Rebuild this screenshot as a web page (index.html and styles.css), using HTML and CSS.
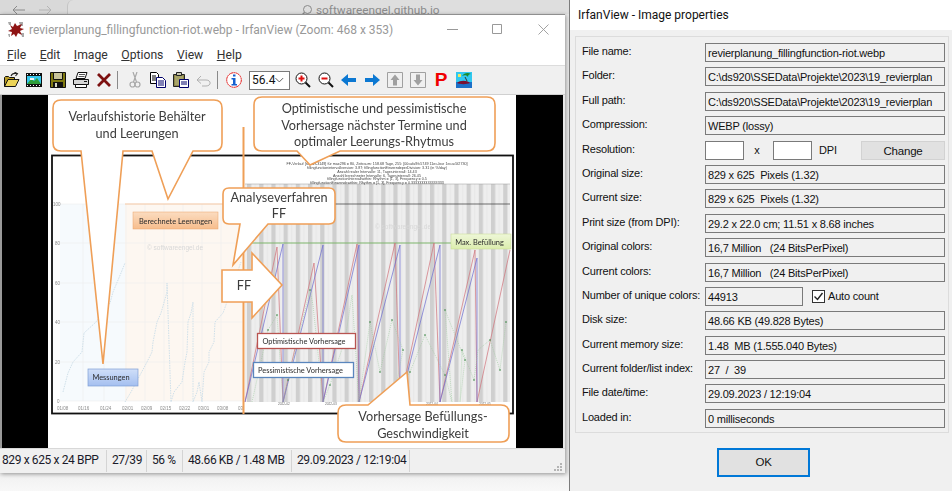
FILE: index.html
```html
<!DOCTYPE html>
<html lang="en">
<head>
    <meta charset="UTF-8">
    <title>IrfanView</title>
    <link rel="stylesheet" href="styles.css">
</head>
<body>
<div class="desktop">

    <!-- browser behind the windows -->
    <div class="browser-bar">
        <svg class="nav-arrow" width="14" height="10" viewBox="0 0 14 10"><path d="M13 5H1M5 1 1 5l4 4" fill="none" stroke="#8a8a8a"/></svg>
        <svg class="nav-arrow" width="14" height="10" viewBox="0 0 14 10"><path d="M1 5h12M9 1l4 4-4 4" fill="none" stroke="#b4b4b4"/></svg>
        <div class="browser-tab">
            <svg class="search-icon" width="14" height="14" viewBox="0 0 14 14"><circle cx="8.500" cy="5.500" r="4" fill="none" stroke="#8a8a8a"/><path d="M5.500 8.500 1 13" stroke="#8a8a8a" stroke-width="1.400"/></svg>
            <span class="browser-url">softwareengel.github.io</span>
        </div>
    </div>

    <!-- main IrfanView window -->
    <div class="viewer-window">
        <div class="titlebar">
            <svg class="app-icon" width="16" height="16" viewBox="0 0 16 16">
                <path d="M11 0h4v4h-3zM0 0h3v3H1zM13 11h3v4h-2zM0 12h2v3H1z" fill="#a8a8a8"/>
                <path d="M2 3 5 5 7 1 9 4 14 2 12 6 16 7 12 9 14 13 10 11 8 15 6 12 3 14 4 10 0 9 4 7Z" fill="#8f1414"/>
            </svg>
            <span class="title-text">revierplanung_fillingfunction-riot.webp - IrfanView (Zoom: 468 x 353)</span>
            <div class="win-controls">
                <svg width="11" height="11" viewBox="0 0 11 11"><path d="M0 5.500h11" stroke="#999"/></svg>
                <svg width="11" height="11" viewBox="0 0 11 11"><path d="M.5.5h9v9h-9z" fill="none" stroke="#999"/></svg>
                <svg width="13" height="11" viewBox="0 0 11 11"><path d="M.5.5l10 10M10.500.5l-10 10" stroke="#999" stroke-width=".9"/></svg>
            </div>
        </div>

        <div class="menubar">
            <span class="menu-item"><u>F</u>ile</span>
            <span class="menu-item"><u>E</u>dit</span>
            <span class="menu-item"><u>I</u>mage</span>
            <span class="menu-item"><u>O</u>ptions</span>
            <span class="menu-item"><u>V</u>iew</span>
            <span class="menu-item"><u>H</u>elp</span>
        </div>

        <div class="toolbar">
            <svg class="tool" viewBox="0 0 16 16"><path d="M.5 14.500V5.500l1-1h3l1 1h5v2" fill="#b89c28" stroke="#111"/><path d="M.5 14.500h11l3.500-7H4z" fill="#ecd458" stroke="#111"/><path d="M7 4c1-2.500 3-3 5.500-2.500M10.500.2l3 1.500-2 2.300" fill="none" stroke="#222" stroke-width="1.100"/></svg>
            <svg class="tool tool-wide" viewBox="0 0 16 16"><path d="M0 1h16v14H0z" fill="#111"/><path d="M1 4h14v8H1z" fill="#37c8ee"/><path d="M1 12l4-5 3 2 3-3 4 6z" fill="#2f9e3a"/><path d="M4 6h4v2H4z" fill="#f2f2f2"/><path d="M1 2h1v1H1zM4 2h1v1H4zM7 2h1v1H7zM10 2h1v1h-1zM13 2h1v1h-1zM1 13h1v1H1zM4 13h1v1H4zM7 13h1v1H7zM10 13h1v1h-1zM13 13h1v1h-1z" fill="#fff"/></svg>
            <svg class="tool" viewBox="0 0 16 16"><path d="M.5.5h15v15H.5z" fill="#807a10" stroke="#111"/><path d="M3.500.5h9v7h-9z" fill="#c8c49a" stroke="#111"/><path d="M3 10h10v5.500H3z" fill="#111"/><path d="M5 11h2v4H5z" fill="#d8d8c0"/></svg>
            <svg class="tool" viewBox="0 0 16 16"><path d="M5 .5h9l-2 6H3z" fill="#fff" stroke="#111"/><path d="M.5 7.500h15v5H.5z" fill="#d6d6d6" stroke="#111"/><path d="M2.500 12.500h11v3h-11z" fill="#fff" stroke="#111"/><path d="M6 2.500h6M5.500 4.500h6" stroke="#555"/><path d="M11 9.500h3" stroke="#111"/></svg>
            <svg class="tool" viewBox="0 0 16 16"><path d="M2 2l12 12M14 2 2 14" stroke="#7c1010" stroke-width="2.800"/></svg>
            <span class="tool-sep"></span>
            <svg class="tool tool-after-sep" viewBox="0 0 16 16"><path d="M6 0l3.500 10M10 0 6.500 10" stroke="#a8a8a8" stroke-width="1.200" fill="none"/><circle cx="5.500" cy="12.500" r="2.500" fill="none" stroke="#a8a8a8" stroke-width="1.200"/><circle cx="10.500" cy="12.500" r="2.500" fill="none" stroke="#a8a8a8" stroke-width="1.200"/></svg>
            <svg class="tool" viewBox="0 0 16 16"><path d="M.5.5h6l2 2v9h-8z" fill="#fff" stroke="#000"/><path d="M2 4h4M2 6h4M2 8h4" stroke="#000"/><path d="M6.500 5.500h6l3 3v7h-9z" fill="#fff" stroke="#00006a"/><path d="M8 9h6M8 11h6M8 13h6" stroke="#00006a"/></svg>
            <svg class="tool" viewBox="0 0 16 16"><path d="M.5 2.500h11v12H.5z" fill="#8c8648" stroke="#222"/><path d="M2 4h8v9H2z" fill="#a8a468"/><path d="M3.500 .5h5v3h-5z" fill="#c8c8b0" stroke="#222"/><path d="M6.500 7.500h9v8h-9z" fill="#fff" stroke="#00006a"/><path d="M8 10h6M8 12h6" stroke="#00006a"/></svg>
            <svg class="tool" viewBox="0 0 16 16"><path d="M1 8h9c5.500 0 5.500 6 0 6H6" fill="none" stroke="#b0b0b0"/><path d="M5 4 1 8l4 3.500" fill="none" stroke="#b0b0b0"/></svg>
            <span class="tool-sep"></span>
            <svg class="tool tool-info" viewBox="0 0 16 16"><circle cx="8" cy="8" r="7.300" fill="#fff" stroke="#e41414" stroke-dasharray="2 .4"/><path d="M7 2.500h2.500v2H7zM5.500 6H9.500v6H11v1.500H5.500V12H7V7.500H5.500z" fill="#1460d0"/></svg>
            <div class="zoom-combo"><span>56.4</span><svg width="9" height="6" viewBox="0 0 9 6"><path d="M.5 1l4 4 4-4" fill="none" stroke="#555"/></svg></div>
            <svg class="tool tool-zoom" viewBox="0 0 16 16"><circle cx="6.500" cy="6.500" r="5.500" fill="#fff" stroke="#111"/><path d="M10.500 10.500 15 15" stroke="#111" stroke-width="2"/><path d="M3.500 6.500h6M6.500 3.500v6" stroke="#e01010" stroke-width="2"/></svg>
            <svg class="tool" viewBox="0 0 16 16"><circle cx="6.500" cy="6.500" r="5.500" fill="#fff" stroke="#111"/><path d="M10.500 10.500 15 15" stroke="#111" stroke-width="2"/><path d="M3.500 6.500h6" stroke="#e01010" stroke-width="2"/></svg>
            <svg class="tool" viewBox="0 0 16 16"><path d="M0 8 7 2v4h8v4H7v4z" fill="#0c78d2"/></svg>
            <svg class="tool" viewBox="0 0 16 16"><path d="M16 8 9 2v4H1v4h8v4z" fill="#0c78d2"/></svg>
            <svg class="tool" viewBox="0 0 16 16"><path d="M.5.5h15v15H.5z" fill="none" stroke="#a0a0a0"/><path d="M8 2.500l4.500 5.500H10v5.500H6V8H3.500z" fill="#a0a0a0"/></svg>
            <svg class="tool" viewBox="0 0 16 16"><path d="M.5.5h15v15H.5z" fill="none" stroke="#a0a0a0"/><path d="M8 13.500 12.500 8H10V2.500H6V8H3.500z" fill="#a0a0a0"/></svg>
            <span class="tool tool-letter">P</span>
            <svg class="tool" viewBox="0 0 16 16"><path d="M0 0h16v16H0z" fill="#30c8f0"/><path d="M0 10h16v6H0z" fill="#1c70c8"/><path d="M1 11c3-3 10-3 13 0-3 1.500-10 1.500-13 0z" fill="#7a1030"/><path d="M11 9 9 5" stroke="#333"/><path d="M6 4c2-3 6-4 9-2-2 0-3 1-3 3-1-2-4-2-6-1z" fill="#1c8a2c"/><path d="M2 2h3v3H2z" fill="#f0e860"/></svg>
        </div>

        <div class="viewport">
            <svg class="picture" width="468" height="353" viewBox="48 95 468 353">
                <defs>
                    <pattern id="stripes" width="12.200" height="10" patternUnits="userSpaceOnUse" x="247">
                        <rect width="12.200" height="10" fill="#eeeeee"/>
                        <rect width="4.200" height="10" fill="#cfcfcf"/>
                        <rect x="8" width=".6" height="10" fill="#e2e2e2"/>
                    </pattern>
                    <linearGradient id="grad-orange" x1="0" y1="0" x2="0" y2="1"><stop offset="0" stop-color="#fbdcc0"/><stop offset="1" stop-color="#f7bd8c"/></linearGradient>
                    <linearGradient id="grad-green" x1="0" y1="0" x2="0" y2="1"><stop offset="0" stop-color="#eef7d8"/><stop offset="1" stop-color="#dcedae"/></linearGradient>
                    <linearGradient id="grad-blue" x1="0" y1="0" x2="0" y2="1"><stop offset="0" stop-color="#d0dff8"/><stop offset="1" stop-color="#a4bff0"/></linearGradient>
                </defs>
                <rect x="48" y="95" width="468" height="353" fill="#fff"/>

                <!-- left chart, history -->
                <rect x="60" y="204" width="65" height="197" fill="#f6fafd"/>
                <rect x="125" y="204" width="118" height="197" fill="#fdf7f1"/>
                <path class="grid" d="M60 204H243M60 243H243M60 283H243M60 322H243M60 362H243M60 401H243M83 204V401M104 204V401M126 204V401M145 204V401M164 204V401M183 204V401M202 204V401M221 204V401"/>
                <path d="M125 204H243" stroke="#f6c8a4"/>
                <polyline class="history" points="63,392 68,373 73,362 82,352 84,333 96,322 110,303 113,292 121,273 125,263"/>
                <polyline class="history" points="125,402 131,392 147,362 152,352 153,342 157,322 161,313 167,292 167,283 171,402 174,392 182,382 185,362 187,352 188,322 191,313 193,302 193,402 197,392 199,382 202,402 204,372 209,362 209,352 214,342 215,322 223,313 227,302 234,282 241,262"/>
                <g class="axis-text">
                    <text x="53" y="206">100</text><text x="55" y="245">80</text><text x="55" y="285">60</text><text x="55" y="324">40</text><text x="55" y="364">20</text><text x="57" y="403">0</text>
                    <text x="57" y="410">01/08</text><text x="78" y="410">01/16</text><text x="100" y="410">01/24</text><text x="122" y="410">02/01</text><text x="141" y="410">02/09</text><text x="160" y="410">02/15</text><text x="179" y="410">02/22</text><text x="198" y="410">03/01</text><text x="217" y="410">03/08</text><text x="238" y="410">03</text>
                </g>
                <text class="watermark" x="147" y="250">© softwareengel.de</text>

                <!-- right chart, forecast -->
                <rect x="245" y="184" width="265" height="218" fill="url(#stripes)"/>
                <path d="M245 184H510" stroke="#999" stroke-width=".5"/>
                <path d="M245 204H510" stroke="#333" stroke-width=".7"/>
                <path d="M245 243H451" stroke="#7db56b" stroke-width="1"/>
                <path class="red-line" d="M245 402 277 247 283 402 314 263 323 402 357 244 359 402 395 243 400 402 434 243 440 402 475 250 477 402 510 250"/>
                <path class="blue-line" d="M245 402 283 244V402L323 245V402L359 245V402L400 245V402L440 245V402L477 258V402"/>
                <polyline class="green-line" points="252,402 268,330 277,315 283,402 288,380 310,290 313,305 323,402 330,385 345,340 352,295 359,402 370,322 380,372 392,320 403,350 393,402 410,372 425,335 445,375 452,402 445,310 465,360 460,402 462,350 474,380 478,350 490,340 500,370 506,322"/>
                <g class="green-dots">
                    <circle cx="268" cy="330" r=".8"/><circle cx="277" cy="315" r=".8"/><circle cx="288" cy="380" r=".8"/><circle cx="310" cy="290" r=".8"/><circle cx="330" cy="385" r=".8"/><circle cx="345" cy="340" r=".8"/><circle cx="370" cy="322" r=".8"/><circle cx="380" cy="372" r=".8"/><circle cx="392" cy="320" r=".8"/><circle cx="403" cy="350" r=".8"/><circle cx="410" cy="372" r=".8"/><circle cx="425" cy="335" r=".8"/><circle cx="445" cy="375" r=".8"/><circle cx="445" cy="310" r=".8"/><circle cx="465" cy="360" r=".8"/><circle cx="462" cy="350" r=".8"/><circle cx="474" cy="380" r=".8"/><circle cx="490" cy="340" r=".8"/><circle cx="500" cy="370" r=".8"/><circle cx="506" cy="322" r=".8"/>
                </g>
                <text class="watermark" x="375" y="229">© softwareengel.de</text>
                <g class="chart-title">
                    <text x="377" y="165">FF-Verlauf [sdf-f2f-3149] für max296 = 80, Zeitraum: 158.68 Tage, 255: [00cafa9fc5749 11ec-bce 1ecac5f2730]</text>
                    <text x="377" y="169">fillingfunctionintervallversion: 3.87; fillingfunctionEinwendeperDivision: 3.31 (in %/day)</text>
                    <text x="377" y="172.500">Anzahl realer Intervalle: 11, Tagesintervall: 14.43</text>
                    <text x="377" y="176.500">Anzahl berechneter Intervalle: 6, Tagesintervall: 26.45</text>
                    <text x="377" y="180">fillingfunctionIntervallwithin: Rhythm = [1, 3], Frequency = 0.5</text>
                    <text x="377" y="183.500">fillingfunctionEinwendewithin: Rhythm = [1, 3], Frequency = 0.3333333333333333</text>
                </g>
                <text class="date-text" x="278" y="405">2022-02</text>
                <text class="date-text" x="325" y="405">2022-03</text>
                <text class="date-text" x="426" y="404.500">2022-04</text>
                <text class="date-text" x="479" y="404.500">2022-05</text>

                <rect class="frame" x="52" y="155.500" width="461" height="258"/>
                <path class="orange-line" d="M243.500 127V414"/>

                <!-- callouts -->
                <path class="callout" d="M61 100H214Q222 100 222 108V143Q222 151 214 151H193L168 199 152 151H123L103 364 81 151H61Q53 151 53 143V108Q53 100 61 100Z"/>
                <text class="callout-text" x="137" y="121">Verlaufshistorie Behälter</text>
                <text class="callout-text" x="137" y="137.500">und Leerungen</text>

                <path class="callout" d="M262 97H487Q495 97 495 105V143Q495 151 487 151H340L310 165 297 151H262Q254 151 254 143V105Q254 97 262 97Z"/>
                <text class="callout-text" x="374" y="113">Optimistische und pessimistische</text>
                <text class="callout-text" x="374" y="130">Vorhersage nächster Termine und</text>
                <text class="callout-text" x="374" y="146">optimaler Leerungs-Rhytmus</text>

                <path class="callout" d="M229 188H329Q335 188 335 194V218Q335 224 329 224H268L233 265 240 224H229Q223 224 223 218V194Q223 188 229 188Z"/>
                <text class="callout-text" x="279" y="202">Analyseverfahren</text>
                <text class="callout-text" x="279" y="218">FF</text>

                <path class="callout" d="M222 270H252V253L282 285 252 318V302H222Z"/>
                <text class="callout-text" x="244" y="290">FF</text>

                <path class="callout" d="M346 405H368L407 372 410 405H501Q509 405 509 413V434Q509 442 501 442H346Q338 442 338 434V413Q338 405 346 405Z"/>
                <text class="callout-text" x="423" y="420.500">Vorhersage Befüllungs-</text>
                <text class="callout-text" x="423" y="437.500">Geschwindigkeit</text>

                <!-- labels on the charts -->
                <rect class="tag tag-orange" x="133" y="212" width="85" height="17"/>
                <text class="tag-text" x="175.500" y="224">Berechnete Leerungen</text>
                <rect class="tag tag-green" x="451" y="234" width="60" height="15"/>
                <text class="tag-text" x="479.500" y="245">Max. Befüllung</text>
                <rect class="tag tag-blue" x="88" y="369" width="50" height="17"/>
                <text class="tag-text" x="111" y="380">Messungen</text>
                <rect class="tag tag-red-line" x="257.500" y="333.500" width="98" height="15"/>
                <text class="tag-text" x="304" y="344">Optimistische  Vorhersage</text>
                <rect class="tag tag-blue-line" x="253.500" y="362.500" width="100" height="15"/>
                <text class="tag-text" x="300.500" y="373">Pessimistische  Vorhersage</text>
            </svg>
        </div>

        <div class="statusbar">
            <span class="status-cell status-size">829 x 625 x 24 BPP</span>
            <span class="status-cell status-index">27/39</span>
            <span class="status-cell status-zoom">56 %</span>
            <span class="status-cell status-bytes">48.66 KB / 1.48 MB</span>
            <span class="status-cell status-date">29.09.2023 / 12:19:04</span>
            <svg class="grip" width="10" height="10" viewBox="0 0 10 10"><path d="M7 1h2v2H7zM4 4h2v2H4zM7 4h2v2H7zM1 7h2v2H1zM4 7h2v2H4zM7 7h2v2H7z" fill="#b4b4b4"/></svg>
        </div>
    </div>

    <!-- properties dialog -->
    <div class="props-window">
        <div class="props-title">IrfanView - Image properties</div>
        <div class="props-body">
            <div class="props-group">
                <span class="prop-label">File name:</span>
                <div class="prop-value">revierplanung_fillingfunction-riot.webp</div>

                <span class="prop-label">Folder:</span>
                <div class="prop-value">C:\ds920\SSEData\Projekte\2023\19_revierplan</div>

                <span class="prop-label">Full path:</span>
                <div class="prop-value">C:\ds920\SSEData\Projekte\2023\19_revierplan</div>

                <span class="prop-label">Compression:</span>
                <div class="prop-value">WEBP (lossy)</div>

                <span class="prop-label">Resolution:</span>
                <div class="prop-inline">
                    <div class="prop-input"></div>
                    <span class="prop-x">x</span>
                    <div class="prop-input"></div>
                    <span class="prop-dpi">DPI</span>
                    <div class="change-btn">Change</div>
                </div>

                <span class="prop-label">Original size:</span>
                <div class="prop-value">829 x 625&nbsp; Pixels (1.32)</div>

                <span class="prop-label">Current size:</span>
                <div class="prop-value">829 x 625&nbsp; Pixels (1.32)</div>

                <span class="prop-label">Print size (from DPI):</span>
                <div class="prop-value">29.2 x 22.0 cm; 11.51 x 8.68 inches</div>

                <span class="prop-label">Original colors:</span>
                <div class="prop-value">16,7 Million &nbsp; (24 BitsPerPixel)</div>

                <span class="prop-label">Current colors:</span>
                <div class="prop-value">16,7 Million &nbsp; (24 BitsPerPixel)</div>

                <span class="prop-label">Number of unique colors:</span>
                <div class="prop-inline">
                    <div class="prop-value prop-unique">44913</div>
                    <span class="check-box"><svg width="11" height="11" viewBox="0 0 11 11"><path d="M1.500 5.500 4.500 8.500 9.500 2" fill="none" stroke="#222" stroke-width="1.400"/></svg></span>
                    <span class="check-label">Auto count</span>
                </div>

                <span class="prop-label">Disk size:</span>
                <div class="prop-value">48.66 KB (49.828 Bytes)</div>

                <span class="prop-label">Current memory size:</span>
                <div class="prop-value">1.48&nbsp; MB (1.555.040 Bytes)</div>

                <span class="prop-label">Current folder/list index:</span>
                <div class="prop-value">27&nbsp; /&nbsp; 39</div>

                <span class="prop-label">File date/time:</span>
                <div class="prop-value">29.09.2023 / 12:19:04</div>

                <span class="prop-label">Loaded in:</span>
                <div class="prop-value">0 milliseconds</div>
            </div>
            <div class="props-actions">
                <div class="ok-btn">OK</div>
            </div>
        </div>
    </div>

</div>
</body>
</html>
```

FILE: styles.css
```css
body {
    margin: 0;
    font-family: "Liberation Sans", Arial, sans-serif;
    color: #111;
}
.desktop {
    position: relative;
    width: 952px;
    height: 491px;
    overflow: hidden;
    background: linear-gradient(to bottom, #e8e8e8 473px, #f2f2f2 478px, #f8f8f8 491px);
}

/* browser behind */
.browser-bar {
    position: absolute;
    left: 0;
    top: 0;
    width: 569px;
    height: 14px;
    display: flex;
    align-items: flex-start;
    background: #d9d9d9;
    overflow: hidden;
}
.nav-arrow {
    margin: 5px 0 0 12px;
    flex: none;
}
.nav-arrow + .nav-arrow {
    margin-left: 12px;
}
.browser-tab {
    flex: 1;
    margin: 0 0 0 15px;
    height: 20px;
    display: flex;
    align-items: flex-start;
    padding-left: 231px;
    background: #dedede;
    border-left: 1px solid #c4c4c4;
    border-radius: 6px 0 0 0;
}
.search-icon {
    margin-top: 4px;
}
.browser-url {
    margin: 3px 0 0 3px;
    font-family: Roboto, sans-serif;
    font-size: 11.800px;
    color: #8c8c8c;
}

/* main window */
.viewer-window {
    position: absolute;
    left: 0;
    top: 14px;
    width: 565px;
    height: 459px;
    display: flex;
    flex-direction: column;
    background: #fff;
    border-top: 1px solid #8f8f8f;
    box-sizing: border-box;
    box-shadow: 1px 1px 4px rgba(0, 0, 0, .35);
}
.titlebar {
    height: 29px;
    flex: none;
    display: flex;
    align-items: center;
    padding-left: 8px;
}
.app-icon {
    flex: none;
}
.title-text {
    margin-left: 5px;
    font-family: Roboto, sans-serif;
    font-size: 12px;
    color: #999;
    white-space: nowrap;
}
.win-controls {
    margin-left: auto;
    display: flex;
    gap: 34px;
    padding-right: 15px;
}
.menubar {
    height: 21px;
    flex: none;
    display: flex;
    align-items: center;
    font-family: Roboto, sans-serif;
    font-size: 12.200px;
    color: #333;
    padding-left: 7px;
    gap: 13.500px;
}
.menu-item {
    white-space: nowrap;
}
.toolbar {
    height: 30px;
    flex: none;
    display: flex;
    align-items: center;
    gap: 7px;
    padding-left: 4px;
    background: #f0f0f0;
    border-top: 1px solid #dcdcdc;
    border-bottom: 1px solid #d0d0d0;
    box-sizing: border-box;
}
.tool {
    width: 16px;
    height: 16px;
    flex: none;
}
.tool-wide {
    margin-left: -1px;
    margin-right: 1px;
}
.tool-sep {
    width: 1px;
    height: 18px;
    margin: 0 -2px;
    background: #8a8a8a;
    flex: none;
}
.tool-after-sep {
    margin-left: 4px;
}
.tool-info {
    margin-left: 3px;
}
.tool-zoom {
    margin-left: -2px;
}
.tool-letter {
    font-weight: bold;
    font-size: 19px;
    line-height: 16px;
    text-align: center;
    color: #f00000;
}
.zoom-combo {
    width: 41px;
    height: 19px;
    box-sizing: border-box;
    border: 1px solid #7a7a7a;
    background: #fff;
    display: flex;
    align-items: center;
    justify-content: space-between;
    padding: 0 5px 0 2px;
    font-family: Roboto, sans-serif;
    font-size: 12px;
    flex: none;
}
.viewport {
    flex: 1;
    min-height: 0;
    display: flex;
    background: #000;
    border-left: 2px solid #9a9a9a;
    border-right: 2px solid #e8e8e8;
    box-sizing: border-box;
    padding-left: 46px;
}
.picture {
    display: block;
    flex: none;
    filter: blur(.3px);
}
.statusbar {
    height: 25px;
    flex: none;
    display: flex;
    align-items: center;
    background: #f0f0f0;
    border-top: 1px solid #d8d8d8;
    box-sizing: border-box;
    font-family: Roboto, sans-serif;
    font-size: 12px;
    letter-spacing: -.38px;
    color: #1a1a2a;
    position: relative;
}
.status-cell {
    height: 22px;
    line-height: 21px;
    box-sizing: border-box;
    padding-left: 5px;
    border-right: 1px solid #d4d4d4;
    white-space: nowrap;
    flex: none;
}
.status-size { width: 107px; padding-left: 2px; }
.status-index { width: 40px; }
.status-zoom { width: 36px; }
.status-bytes { width: 109px; }
.status-date { width: 118px; }
.grip {
    position: absolute;
    right: 2px;
    bottom: 1px;
}

/* chart parts */
.grid {
    stroke: #eeeeee;
    stroke-width: .6;
    fill: none;
}
.history {
    fill: none;
    stroke: #cfe0ea;
    stroke-width: 1;
    stroke-dasharray: 1.500 1;
}
.axis-text text {
    font-family: "Liberation Sans", sans-serif;
    font-size: 4.500px;
    fill: #8a8a8a;
}
.watermark {
    font-family: "Liberation Sans", sans-serif;
    font-size: 6.500px;
    fill: #d8d8d8;
}
.red-line {
    fill: none;
    stroke: #d07078;
    stroke-width: .7;
}
.blue-line {
    fill: none;
    stroke: #6a6ad0;
    stroke-width: .7;
}
.green-line {
    fill: none;
    stroke: #9ecb9e;
    stroke-width: .6;
    stroke-dasharray: 1 1;
}
.green-dots circle {
    fill: #2f7d3a;
}
.chart-title text {
    font-family: "Liberation Sans", sans-serif;
    font-size: 3.700px;
    text-anchor: middle;
    fill: #444;
}
.date-text {
    font-family: "Liberation Sans", sans-serif;
    font-size: 3.200px;
    fill: #666;
}
.frame {
    fill: none;
    stroke: #111;
    stroke-width: 1.800;
}
.orange-line {
    stroke: #ef9f57;
    stroke-width: 2;
}
.callout {
    fill: #fff;
    stroke: #ef9f57;
    stroke-width: 1.600;
}
.callout-text {
    font-family: Lato, sans-serif;
    font-size: 12.700px;
    text-anchor: middle;
    fill: #3c3c3c;
}
.tag-text {
    font-family: Lato, sans-serif;
    font-size: 7.400px;
    text-anchor: middle;
    fill: #2c2c2c;
}
.tag-orange { fill: url(#grad-orange); stroke: #eaa46c; stroke-width: .5; }
.tag-green { fill: url(#grad-green); stroke: #c6dc90; stroke-width: .5; }
.tag-blue { fill: url(#grad-blue); stroke: #7f9fd4; stroke-width: .7; }
.tag-red-line { fill: #fff; stroke: #b85450; stroke-width: 1.300; }
.tag-blue-line { fill: #fff; stroke: #5a86bd; stroke-width: 1.300; }

/* dialog */
.props-window {
    position: absolute;
    left: 569px;
    top: 0;
    width: 383px;
    height: 491px;
    display: flex;
    flex-direction: column;
    border-left: 1px solid #7c7c7c;
    box-sizing: border-box;
    background: #f0f0f0;
    font-size: 11px;
    letter-spacing: -.2px;
}
.props-title {
    height: 30px;
    flex: none;
    line-height: 30px;
    padding-left: 8px;
    background: #fff;
    font-family: Roboto, sans-serif;
    font-size: 12px;
    letter-spacing: 0;
}
.props-body {
    flex: 1;
    padding: 6px 3px 0 5px;
}
.props-group {
    display: grid;
    grid-template-columns: 123px 240px;
    grid-auto-rows: 19px;
    row-gap: 5.400px;
    align-items: center;
    padding: 6px 3px 4px 6px;
    border: 1px solid #dcdcdc;
}
.prop-label {
    white-space: nowrap;
    margin-top: -3px;
}
.prop-value {
    height: 19px;
    line-height: 18px;
    box-sizing: border-box;
    border: 1px solid #7a7a7a;
    padding-left: 2px;
    white-space: nowrap;
    overflow: hidden;
}
.prop-inline {
    display: flex;
    align-items: center;
    height: 19px;
}
.prop-input {
    width: 39px;
    height: 19px;
    box-sizing: border-box;
    border: 1px solid #7a7a7a;
    background: #fff;
    flex: none;
}
.prop-x {
    width: 29px;
    padding-right: 3px;
    box-sizing: border-box;
    text-align: center;
}
.prop-dpi {
    width: 49px;
    padding-left: 7px;
    box-sizing: border-box;
}
.change-btn {
    flex: 1;
    height: 19px;
    line-height: 18px;
    box-sizing: border-box;
    text-align: center;
    background: #e1e1e1;
    border: 1px solid #d2d2d2;
    font-size: 11.500px;
}
.prop-unique {
    width: 98px;
    flex: none;
}
.check-box {
    width: 13px;
    height: 13px;
    margin-left: 9px;
    box-sizing: border-box;
    border: 1px solid #333;
    background: #fff;
    display: flex;
    align-items: center;
    justify-content: center;
}
.check-label {
    margin-left: 3px;
    font-size: 11px;
}
.props-actions {
    display: flex;
    justify-content: flex-start;
    padding: 15px 0 0 142px;
}
.ok-btn {
    width: 93px;
    height: 29px;
    line-height: 25px;
    box-sizing: border-box;
    text-align: center;
    background: #e1e1e1;
    border: 2px solid #0078d7;
    font-size: 11.500px;
}
```
